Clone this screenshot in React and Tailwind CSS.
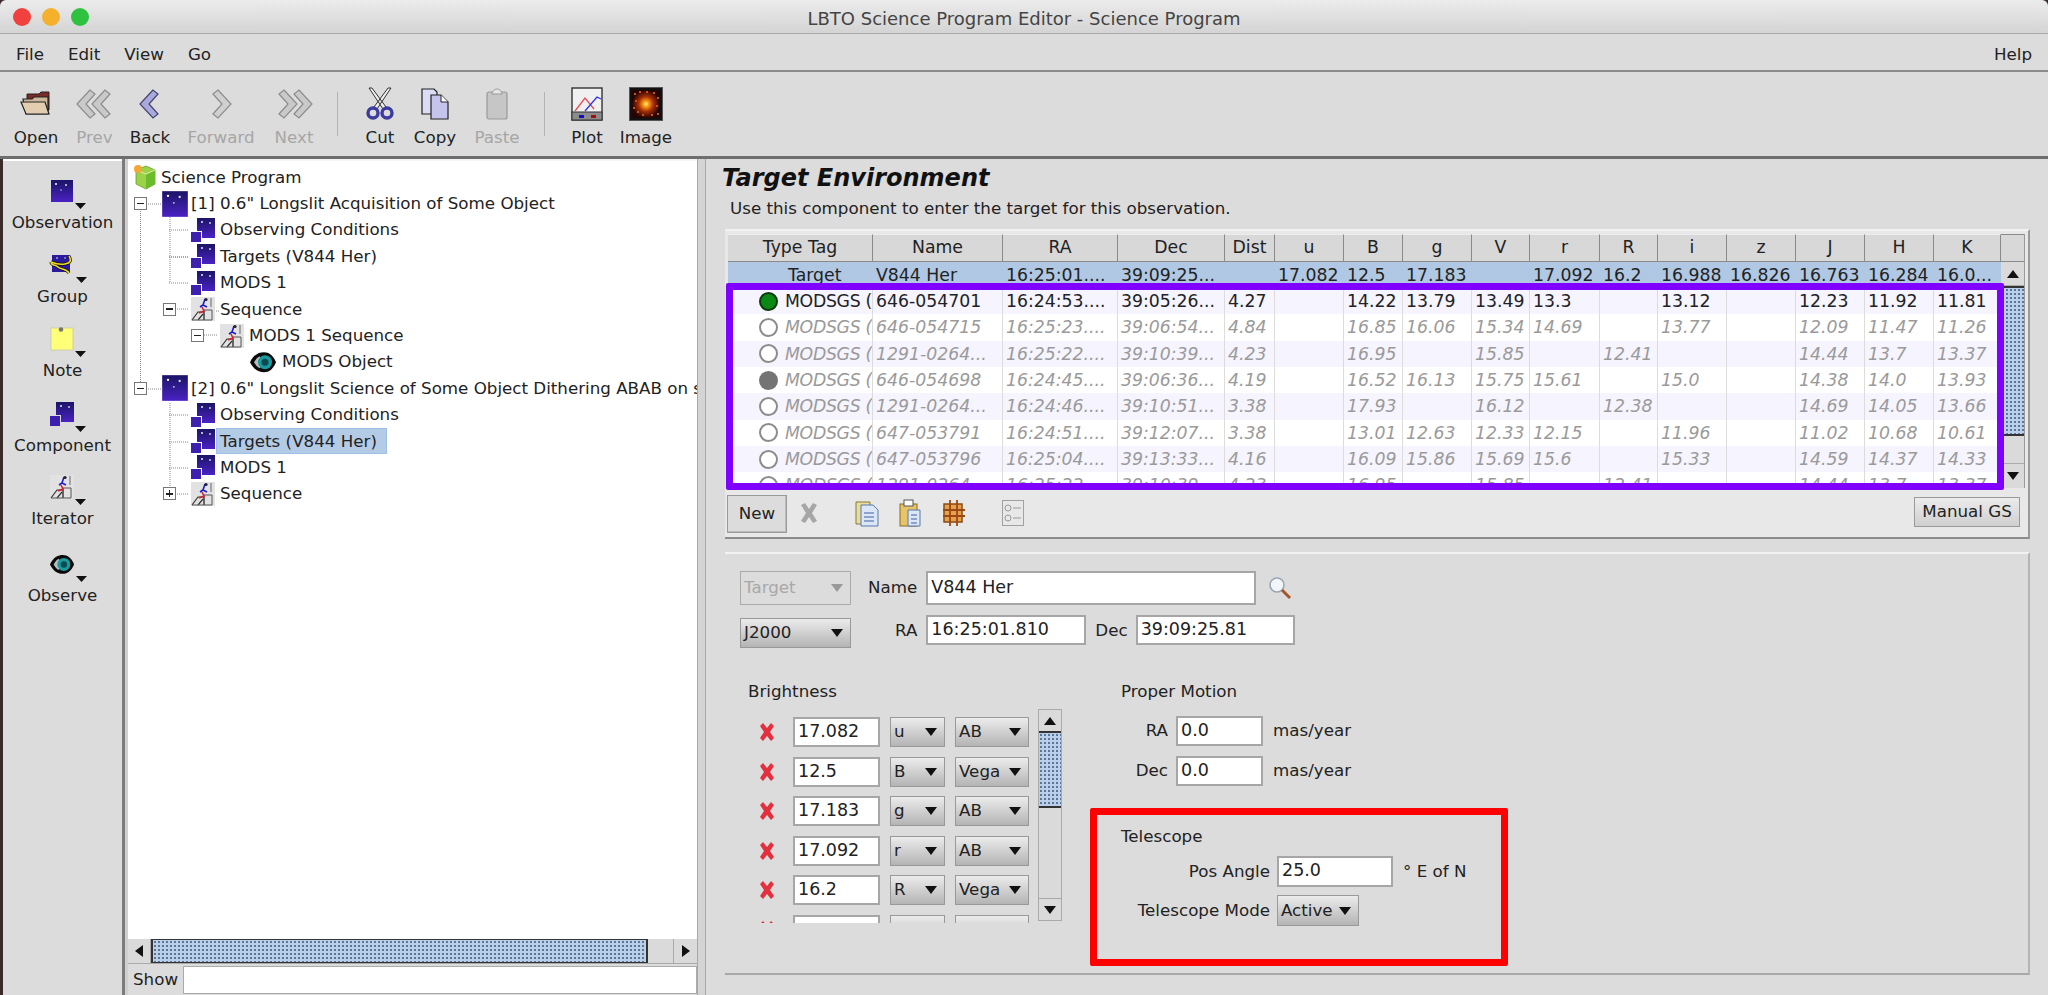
import React from "react";

const tableCols = ["Type Tag", "Name", "RA", "Dec", "Dist", "u", "B", "g", "V", "r", "R", "i", "z", "J", "H", "K"];
const gridCols = "grid grid-cols-[145px_130px_115px_107px_50px_69px_59px_69px_58px_70px_58px_69px_69px_69px_69px_67px]";

const targetRow = ["Target", "V844 Her", "16:25:01....", "39:09:25...", "", "17.082", "12.5", "17.183", "", "17.092", "16.2", "16.988", "16.826", "16.763", "16.284", "16.0..."];

const guideStars = [
  { radio: "green", cells: ["MODSGS (", "646-054701", "16:24:53....", "39:05:26...", "4.27", "", "14.22", "13.79", "13.49", "13.3", "", "13.12", "", "12.23", "11.92", "11.81"] },
  { radio: "empty", cells: ["MODSGS (", "646-054715", "16:25:23....", "39:06:54...", "4.84", "", "16.85", "16.06", "15.34", "14.69", "", "13.77", "", "12.09", "11.47", "11.26"] },
  { radio: "empty", cells: ["MODSGS (", "1291-0264...", "16:25:22....", "39:10:39...", "4.23", "", "16.95", "", "15.85", "", "12.41", "", "", "14.44", "13.7", "13.37"] },
  { radio: "gray", cells: ["MODSGS (", "646-054698", "16:24:45....", "39:06:36...", "4.19", "", "16.52", "16.13", "15.75", "15.61", "", "15.0", "", "14.38", "14.0", "13.93"] },
  { radio: "empty", cells: ["MODSGS (", "1291-0264...", "16:24:46....", "39:10:51...", "3.38", "", "17.93", "", "16.12", "", "12.38", "", "", "14.69", "14.05", "13.66"] },
  { radio: "empty", cells: ["MODSGS (", "647-053791", "16:24:51....", "39:12:07...", "3.38", "", "13.01", "12.63", "12.33", "12.15", "", "11.96", "", "11.02", "10.68", "10.61"] },
  { radio: "empty", cells: ["MODSGS (", "647-053796", "16:25:04....", "39:13:33...", "4.16", "", "16.09", "15.86", "15.69", "15.6", "", "15.33", "", "14.59", "14.37", "14.33"] },
  { radio: "empty", cells: ["MODSGS (", "1291-0264...", "16:25:22....", "39:10:39...", "4.23", "", "16.95", "", "15.85", "", "12.41", "", "", "14.44", "13.7", "13.37"] },
];

const brightness = [
  ["17.082", "u", "AB"],
  ["12.5", "B", "Vega"],
  ["17.183", "g", "AB"],
  ["17.092", "r", "AB"],
  ["16.2", "R", "Vega"],
  ["", "", ""],
];

// speckles for the little image thumbnail in the toolbar
const flareDots = [
  [5, 6], [10, 4], [24, 5], [28, 10], [6, 13], [27, 18], [8, 24], [13, 27], [22, 27], [28, 26], [4, 20], [17, 4],
];

function Stars({ size = 24 }) {
  return (
    <svg width={size} height={size} viewBox="0 0 24 24">
      <defs>
        <linearGradient id="night" x1="0" y1="0" x2="0" y2="1">
          <stop offset="0" stopColor="#1b1466" />
          <stop offset="1" stopColor="#4a22c4" />
        </linearGradient>
      </defs>
      <rect x="1" y="1" width="22" height="22" fill="url(#night)" />
      <circle cx="6" cy="5" r="1" fill="#fff" />
      <circle cx="16" cy="6" r="1" fill="#ddd" />
      <circle cx="11" cy="11" r="0.8" fill="#ccc" />
    </svg>
  );
}

function ComponentIcon({ size = 24 }) {
  return (
    <svg width={size} height={size} viewBox="0 0 24 24">
      <defs>
        <linearGradient id="night2" x1="0" y1="0" x2="0" y2="1">
          <stop offset="0" stopColor="#1b1466" />
          <stop offset="1" stopColor="#4a22c4" />
        </linearGradient>
      </defs>
      <path d="M6 0h18v20H11v-7H6z" fill="url(#night2)" />
      <rect x="0" y="14" width="10" height="10" fill="#3d20b0" />
      <circle cx="11" cy="4" r="0.9" fill="#fff" />
      <circle cx="19" cy="5" r="0.9" fill="#ddd" />
    </svg>
  );
}

function SeqIcon({ size = 24 }) {
  return (
    <svg width={size} height={size} viewBox="0 0 24 24">
      <rect x="0" y="0" width="24" height="24" fill="#e2e2e2" />
      <path d="M1 23l6-8h6v8M7 23l5-6" fill="none" stroke="#333" strokeWidth="1.2" />
      <path d="M13 23V13h8v10H1" fill="none" stroke="#555" strokeWidth="1" />
      <path d="M20 1v9" stroke="#666" strokeWidth="1" />
      <path d="M14 2l-2 6-3 2M12 8l4 2" fill="none" stroke="#1c1ccc" strokeWidth="1.6" />
      <path d="M11 10l2 4-5 2" fill="none" stroke="#d32030" strokeWidth="1.6" />
      <circle cx="15" cy="2.5" r="1.6" fill="#222" />
    </svg>
  );
}

function EyeIcon({ width = 28 }) {
  return (
    <svg width={width} height={width * 0.8} viewBox="0 0 28 22">
      <path d="M1 11C5 3 10 1 15 1s9 3 12 10c-3 7-7 10-12 10S5 19 1 11z" fill="#0a0a0a" />
      <path d="M5 11c2-3 3-5 6-6v12c-3-1-4-3-6-6z" fill="#bbb" />
      <circle cx="16" cy="11" r="7" fill="#1a9aa0" />
      <circle cx="16" cy="11" r="3.5" fill="#0c4a50" />
    </svg>
  );
}

function CubeIcon() {
  return (
    <svg width="24" height="26" viewBox="0 0 24 26">
      <path d="M3 6l10-4 9 4v14l-9 5-10-5z" fill="#9bd24a" stroke="#6a9a30" strokeWidth="0.8" />
      <path d="M13 10v15l9-5V6z" fill="#6cbb2a" />
      <path d="M3 6l10 4 9-4" fill="none" stroke="#dff0a0" strokeWidth="1" />
      <circle cx="5" cy="5" r="4" fill="#f2a634" />
    </svg>
  );
}

function GroupIcon() {
  return (
    <svg width="26" height="24" viewBox="0 0 26 24">
      <rect x="3" y="2" width="18" height="17" fill="#2c1a9c" />
      <circle cx="8" cy="5" r="0.8" fill="#fff" />
      <circle cx="16" cy="5" r="0.8" fill="#ddd" />
      <path d="M2 9c0 4 4 2 7 5s8 1 11 6M20 3c3 5 1 7-4 8s-9 0-14-2" fill="none" stroke="#111" strokeWidth="3" />
      <path d="M2 9c0 4 4 2 7 5s8 1 11 6M20 3c3 5 1 7-4 8s-9 0-14-2" fill="none" stroke="#f0dc20" strokeWidth="1.5" />
    </svg>
  );
}

function NoteIcon() {
  return (
    <svg width="24" height="24" viewBox="0 0 24 24">
      <rect x="1" y="1" width="22" height="22" fill="#ffff78" stroke="#c8c8a0" strokeWidth="0.8" />
      <circle cx="11" cy="2.5" r="2.3" fill="#777" />
    </svg>
  );
}

function DropMark() {
  return (
    <svg width="11" height="6" viewBox="0 0 11 6" className="ml-[1px] self-end mb-[-4px]">
      <path d="M0 0h11L5.5 6z" fill="#111" />
    </svg>
  );
}

function Chevrons({ dir, count, fill, line }) {
  const flip = dir === "left" ? "" : "scale(-1 1) translate(-38 0)";
  return (
    <svg width="38" height="30" viewBox="0 0 38 30">
      <g transform={flip}>
        {count === 2 && <path d="M14 1L1 15l13 14 5-4-9-10 9-10z" fill={fill} stroke={line} strokeWidth="1.2" />}
        <path d={count === 2 ? "M29 1L16 15l13 14 5-4-9-10 9-10z" : "M22 1L9 15l13 14 5-4-9-10 9-10z"} fill={fill} stroke={line} strokeWidth="1.2" />
      </g>
    </svg>
  );
}

function ToolIcon({ name }) {
  if (name === "Open") {
    return (
      <svg width="32" height="26" viewBox="0 0 32 26">
        <path d="M7 6V3h12l2-2h8v18H7z" fill="#7a2a2a" stroke="#222" strokeWidth="1" />
        <path d="M3 8h9l2-2h14v17H6z" fill="#cdb79a" stroke="#222" strokeWidth="1.2" />
        <path d="M1 11h24l4 12H6z" fill="#e3cdb0" stroke="#222" strokeWidth="1.2" />
      </svg>
    );
  }
  if (name === "Prev") return <Chevrons dir="left" count={2} fill="#c9c9c9" line="#8c8c8c" />;
  if (name === "Back") return <Chevrons dir="left" count={1} fill="#a9a9dc" line="#44446e" />;
  if (name === "Forward") return <Chevrons dir="right" count={1} fill="#d0d0d0" line="#8c8c8c" />;
  if (name === "Next") return <Chevrons dir="right" count={2} fill="#c9c9c9" line="#8c8c8c" />;
  if (name === "Cut") {
    return (
      <svg width="28" height="34" viewBox="0 0 28 34">
        <path d="M3 1l14 21 3-2L6 1zM25 1L11 22l-3-2L22 1z" fill="#eee" stroke="#333" strokeWidth="1" />
        <circle cx="7" cy="26" r="5" fill="none" stroke="#3c3ca0" strokeWidth="3.4" />
        <circle cx="21" cy="26" r="5" fill="none" stroke="#3c3ca0" strokeWidth="3.4" />
      </svg>
    );
  }
  if (name === "Copy") {
    return (
      <svg width="28" height="32" viewBox="0 0 28 32">
        <path d="M1 1h12l3 3v22H1z" fill="#dcdcf4" stroke="#222" strokeWidth="1.2" />
        <path d="M10 7h10l7 7v17H10z" fill="#c4c4ec" stroke="#222" strokeWidth="1.2" />
        <path d="M20 7v7h7" fill="#fff" stroke="#222" strokeWidth="1" />
      </svg>
    );
  }
  if (name === "Paste") {
    return (
      <svg width="22" height="32" viewBox="0 0 22 32">
        <rect x="1" y="4" width="20" height="27" rx="2" fill="#c6c6c6" stroke="#999" strokeWidth="1.2" />
        <path d="M6 6c0-3 3-5 5-5s5 2 5 5z" fill="#e6e6e6" stroke="#999" strokeWidth="1" />
      </svg>
    );
  }
  if (name === "Plot") {
    return (
      <svg width="32" height="34" viewBox="0 0 32 34">
        <rect x="1" y="1" width="30" height="32" fill="#f0f0f0" stroke="#333" strokeWidth="1.4" />
        <rect x="1" y="25" width="30" height="8" fill="#8c8c8c" stroke="#333" strokeWidth="1" />
        <path d="M4 24l10-13 9 11" fill="none" stroke="#ee4a50" strokeWidth="1.3" />
        <path d="M14 24L26 10l4 2" fill="none" stroke="#3030e0" strokeWidth="1.3" />
        <rect x="8" y="28" width="5" height="3" fill="#1010c0" />
        <rect x="20" y="28" width="5" height="3" fill="#a01010" />
      </svg>
    );
  }
  return (
    <svg width="34" height="34" viewBox="0 0 34 34">
      <defs>
        <radialGradient id="flare">
          <stop offset="0" stopColor="#fff6a0" />
          <stop offset="0.2" stopColor="#ff9a10" />
          <stop offset="0.55" stopColor="#a32c06" />
          <stop offset="1" stopColor="#240503" />
        </radialGradient>
      </defs>
      <rect x="0.5" y="0.5" width="33" height="33" fill="#111" stroke="#555" />
      <rect x="3" y="3" width="28" height="28" fill="url(#flare)" />
      {flareDots.map(([x, y]) => (
        <rect key={`${x}-${y}`} x={x} y={y} width="2" height="2" fill="#c8501a" />
      ))}
    </svg>
  );
}

function TreeExpander({ open = true }) {
  return (
    <span className="flex h-[13px] w-[13px] items-center justify-center border border-[#777] bg-white">
      <span className="relative h-[1.5px] w-[7px] bg-[#222]">
        {!open && <span className="absolute left-[2.75px] top-[-2.75px] h-[7px] w-[1.5px] bg-[#222]" />}
      </span>
    </span>
  );
}

function TreeRow({ indent, expander, open, icon, iconBox, selected, children }) {
  return (
    <div className="flex h-[26.4px] items-center whitespace-nowrap" style={{ paddingLeft: indent }}>
      {expander !== undefined && (
        <span className="flex shrink-0" style={{ width: expander }}>
          <TreeExpander open={open} />
        </span>
      )}
      <span className="flex shrink-0 items-center" style={{ width: iconBox }}>
        {icon}
      </span>
      <span className={selected ? "-ml-[4px] border border-[#9cc0ea] bg-[#b4cbe6] pl-[3px] pr-[9px] leading-[24px]" : ""}>{children}</span>
    </div>
  );
}

function Arrow({ dir, color = "#111" }) {
  const d = { up: "M0 8h12L6 0z", down: "M0 0h12L6 8z", left: "M8 0v12L0 6z", right: "M0 0v12l8-6z" }[dir];
  const vertical = dir === "up" || dir === "down";
  return (
    <svg width={vertical ? 12 : 8} height={vertical ? 8 : 12} viewBox={vertical ? "0 0 12 8" : "0 0 8 12"}>
      <path d={d} fill={color} />
    </svg>
  );
}

const thumbV = "border-y-2 border-[#333] bg-[#b9cfea] bg-[radial-gradient(#5d7596_1px,transparent_1.3px)] bg-size-[4px_4px]";

function Select({ value, className = "", disabled }) {
  return (
    <div
      className={`flex items-center justify-between pl-[3px] pr-[7px] border ${
        disabled
          ? "border-[#aaa] bg-[#dcdcdc] text-[#a8a8a8]"
          : "border-[#999] bg-linear-to-b from-[#ececec] to-[#b4b4b4] text-[#222]"
      } ${className}`}
    >
      <span>{value}</span>
      <Arrow dir="down" color={disabled ? "#999" : "#111"} />
    </div>
  );
}

function Field({ value, className = "" }) {
  return <div className={`border-2 border-[#a6a6a6] bg-white pl-[3px] text-[17.5px] text-[#222] ${className}`}>{value}</div>;
}

function RemoveMark() {
  return (
    <svg width="16" height="20" viewBox="0 0 16 20">
      <path d="M1 4l3-3 4 5 4-5 3 3-4 6 4 6-3 3-4-5-4 5-3-3 4-6z" fill="#e4303e" />
    </svg>
  );
}

function Radio({ kind }) {
  if (kind === "green") return <span className="h-[19px] w-[19px] shrink-0 rounded-full border-2 border-[#0f3a0f] bg-[#0a8a14]" />;
  if (kind === "gray") return <span className="h-[19px] w-[19px] shrink-0 rounded-full bg-[#747474]" />;
  return <span className="h-[19px] w-[19px] shrink-0 rounded-full border-2 border-[#8c8c8c] bg-white" />;
}

function SideButton({ icon, label, mt }) {
  return (
    <div className={`flex flex-col items-center ${mt}`}>
      <div className="flex h-[28px] items-center pl-[10px]">
        {icon}
        <DropMark />
      </div>
      <span className="mt-[6px] leading-[22px]">{label}</span>
    </div>
  );
}

function ToolButton({ name, width, disabled }) {
  return (
    <div className="flex flex-col items-center" style={{ width }}>
      <div className="flex h-[36px] items-center">
        <ToolIcon name={name} />
      </div>
      <span className={`mt-[4px] leading-[22px] ${disabled ? "text-[#a6a6a6]" : "text-[#222]"}`}>{name}</span>
    </div>
  );
}

export default function App() {
  return (
    <div className="flex h-[995px] w-[2048px] flex-col overflow-hidden bg-[#3a2a2a] font-['DejaVu_Sans',sans-serif] text-[16.7px] text-[#222]">
      {/* title bar */}
      <div className="relative flex h-[34px] shrink-0 items-center justify-center rounded-t-[6px] border-b border-[#a8a8a8] bg-linear-to-b from-[#ececec] to-[#d4d4d4] pt-[3px] text-[18px] text-[#444]">
        <div className="absolute left-[13px] top-[8px] flex gap-[11px]">
          <span className="h-[18px] w-[18px] rounded-full bg-[#f0413e]" />
          <span className="h-[18px] w-[18px] rounded-full bg-[#f5b02e]" />
          <span className="h-[18px] w-[18px] rounded-full bg-[#2fc23f]" />
        </div>
        LBTO Science Program Editor - Science Program
      </div>

      {/* menu bar */}
      <div className="flex h-[38px] shrink-0 items-center gap-[24px] border-b-2 border-[#8a8a8a] bg-[#dcdcdc] pl-[16px] pr-[16px] pt-[6px]">
        <span>File</span>
        <span>Edit</span>
        <span>View</span>
        <span>Go</span>
        <span className="ml-auto">Help</span>
      </div>

      {/* toolbar */}
      <div className="flex h-[87px] shrink-0 items-start border-b-[3px] border-[#6e6e6e] bg-[#dcdcdc] pl-[7px] pt-[14px]">
        <ToolButton name="Open" width={58} />
        <ToolButton name="Prev" width={59} disabled />
        <ToolButton name="Back" width={52} />
        <ToolButton name="Forward" width={90} disabled />
        <ToolButton name="Next" width={56} disabled />
        <span className="mx-[15px] mt-[6px] h-[44px] w-[1px] bg-[#b4b4b4]" />
        <ToolButton name="Cut" width={54} />
        <ToolButton name="Copy" width={56} />
        <ToolButton name="Paste" width={68} disabled />
        <span className="mx-[13px] mt-[6px] h-[44px] w-[1px] bg-[#b4b4b4]" />
        <ToolButton name="Plot" width={58} />
        <ToolButton name="Image" width={60} />
      </div>

      <div className="flex min-h-0 flex-1">
        {/* palette */}
        <div className="ml-[3px] flex w-[119px] shrink-0 flex-col border-t-2 border-white bg-[#dcdcdc] pt-[16px]">
          <SideButton icon={<Stars />} label="Observation" mt="" />
          <SideButton icon={<GroupIcon />} label="Group" mt="mt-[18px]" />
          <SideButton icon={<NoteIcon />} label="Note" mt="mt-[18px]" />
          <SideButton icon={<ComponentIcon />} label="Component" mt="mt-[19px]" />
          <SideButton icon={<SeqIcon />} label="Iterator" mt="mt-[17px]" />
          <SideButton icon={<EyeIcon width={26} />} label="Observe" mt="mt-[21px]" />
        </div>
        <div className="w-[6px] shrink-0 border-l-[3px] border-[#7c7c7c] bg-[#d0d0d0]" />

        {/* tree */}
        <div className="flex w-[569px] shrink-0 flex-col">
          <div className="relative min-h-0 flex-1 overflow-hidden border-t-2 border-[#f4f4f4] bg-white pt-[3px]">
            <svg className="absolute left-0 top-[2px]" width="569" height="340">
              <g stroke="#888" strokeWidth="1" strokeDasharray="1 1" fill="none">
                <path d="M12.5 34V226M42 54V120M70 108V120M70 134v14h22" />
                <path d="M20 41h13M41 94h19M41 67h19M41 94h19M41 120h19" />
                <path d="M41 146h19M70 172h20M20 226h13M41 252h19M41 279h19M41 305h19M41 331h19" />
                <path d="M42 240V331" />
              </g>
            </svg>
            <div className="relative">
              <TreeRow indent={5} iconBox={28} icon={<CubeIcon />}>Science Program</TreeRow>
              <TreeRow indent={6} expander={27} icon={<Stars size={28} />} iconBox={30}>[1] 0.6" Longslit Acquisition of Some Object</TreeRow>
              <TreeRow indent={63} icon={<ComponentIcon />} iconBox={29}>Observing Conditions</TreeRow>
              <TreeRow indent={63} icon={<ComponentIcon />} iconBox={29}>Targets (V844 Her)</TreeRow>
              <TreeRow indent={63} icon={<ComponentIcon />} iconBox={29}>MODS 1</TreeRow>
              <TreeRow indent={35} expander={28} icon={<SeqIcon />} iconBox={29}>Sequence</TreeRow>
              <TreeRow indent={63} expander={29} icon={<SeqIcon />} iconBox={29}>MODS 1 Sequence</TreeRow>
              <TreeRow indent={121} icon={<EyeIcon />} iconBox={33}>MODS Object</TreeRow>
              <TreeRow indent={6} expander={27} icon={<Stars size={28} />} iconBox={30}>[2] 0.6" Longslit Science of Some Object Dithering ABAB on sky</TreeRow>
              <TreeRow indent={63} icon={<ComponentIcon />} iconBox={29}>Observing Conditions</TreeRow>
              <TreeRow indent={63} icon={<ComponentIcon />} iconBox={29} selected>Targets (V844 Her)</TreeRow>
              <TreeRow indent={63} icon={<ComponentIcon />} iconBox={29}>MODS 1</TreeRow>
              <TreeRow indent={35} expander={28} open={false} icon={<SeqIcon />} iconBox={29}>Sequence</TreeRow>
            </div>
          </div>
          <div className="flex h-[24px] shrink-0 bg-[#dadada]">
            <span className="flex w-[23px] items-center justify-center border-r border-[#aaa]"><Arrow dir="left" /></span>
            <span className="w-[497px] border-y border-x-2 border-[#333] bg-[#b9cfea] bg-[radial-gradient(#5d7596_1px,transparent_1.3px)] bg-size-[4px_4px]" />
            <span className="flex-1" />
            <span className="flex w-[24px] items-center justify-center border-l border-[#aaa]"><Arrow dir="right" /></span>
          </div>
          <div className="flex h-[32px] shrink-0 items-center border-t border-[#aaa] bg-[#dcdcdc] pl-[5px]">
            <span className="w-[50px]">Show</span>
            <span className="h-[28px] flex-1 border border-[#aaa] bg-white" />
          </div>
        </div>

        {/* divider */}
        <div className="w-[9px] shrink-0 border-x border-[#a8a8a8] bg-[#d4d4d4]" />

        {/* editor */}
        <div className="flex min-w-0 flex-1 flex-col bg-[#dcdcdc]">
          <div className="pl-[16px] pt-[4px] text-[24px] font-bold italic leading-[30px] text-[#111]">Target Environment</div>
          <div className="mt-[3px] pl-[24px] leading-[24px] text-[#222]">Use this component to enter the target for this observation.</div>

          {/* table panel */}
          <div className="ml-[19px] mt-[9px] flex h-[310px] w-[1305px] flex-col border-y-2 border-r-2 border-t-[#f2f2f2] border-r-[#9a9a9a] border-b-[#8c8c8c] bg-[#e8e8e8]">
            <div className="relative ml-[3px] mt-[3px] w-[1297px] border-r border-[#999] text-[17.3px]">
              <div className="flex h-[28px]">
                <div className={gridCols}>
                  {tableCols.map((col) => (
                    <div key={col} className="flex h-[28px] items-center justify-center border-y border-r border-[#8a8a8a] border-t-[#eee] bg-[#d8d8d8] text-[#222]">
                      {col}
                    </div>
                  ))}
                </div>
                <div className="w-[23px] border-y border-[#8a8a8a] bg-[#d8d8d8]" />
              </div>
              <div className="flex h-[226px]">
                <div className="h-[226px] overflow-hidden bg-white">
                  <div className={`${gridCols} h-[26px] bg-[#b0c8e3] text-[#222]`}>
                    {targetRow.map((cell, i) => (
                      <div key={i} className={`overflow-hidden whitespace-nowrap leading-[26px] ${i === 0 ? "pl-[60px]" : "pl-[3px]"}`}>{cell}</div>
                    ))}
                  </div>
                  {guideStars.map((row, r) => (
                    <div key={r} className={`${gridCols} h-[26.33px] ${r % 2 === 0 ? "bg-[#f5f4ff]" : "bg-white"} ${r === 0 ? "text-[#222]" : "italic text-[#9a9a9a]"}`}>
                      {row.cells.map((cell, i) => (
                        <div key={i} className={`overflow-hidden whitespace-nowrap border-r border-[#dcdcdc] leading-[26px] ${i === 0 ? "flex items-center pl-[31px]" : "pl-[3px]"}`}>
                          {i === 0 && <Radio kind={row.radio} />}
                          {i === 0 ? <span className="ml-[7px] tracking-[-0.3px]">{cell}</span> : cell}
                        </div>
                      ))}
                    </div>
                  ))}
                </div>
                <div className="flex w-[23px] flex-col bg-[#dadada]">
                  <span className="flex h-[24px] items-center justify-center border-b border-[#aaa]"><Arrow dir="up" /></span>
                  <span className={`h-[150px] ${thumbV}`} />
                  <span className="flex-1" />
                  <span className="flex h-[25px] items-center justify-center border-t border-[#aaa]"><Arrow dir="down" /></span>
                </div>
              </div>
              {/* highlight frame drawn on top of the guide star rows */}
              <div className="pointer-events-none absolute left-[-2px] top-[49px] h-[207px] w-[1278px] rounded-[2px] border-[7px] border-[#7f00ff]" />
            </div>
            <div className="flex flex-1 items-center pl-[2px]">
              <button className="mt-[2px] h-[38px] w-[60px] border border-[#9a9a9a] bg-[#dcdcdc] shadow-[inset_-1px_-1px_0_#bbb]">New</button>
              <svg className="ml-[12px]" width="20" height="24" viewBox="0 0 20 24">
                <path d="M2 4l4-2 4 6 4-6 4 2-5 8 5 8-4 2-4-6-4 6-4-2 5-8z" fill="#a6a6a6" />
              </svg>
              <svg className="ml-[36px]" width="24" height="28" viewBox="0 0 24 28">
                <path d="M1 3h14v22H1z" fill="#e8dca0" stroke="#8a7a30" />
                <path d="M6 6h12l5 5v16H6z" fill="#dbe6f6" stroke="#5878a8" />
                <path d="M9 14h10M9 18h10M9 22h10" stroke="#4060a0" />
              </svg>
              <svg className="ml-[20px]" width="24" height="28" viewBox="0 0 24 28">
                <rect x="1" y="5" width="17" height="22" fill="#e8c468" stroke="#8a6a20" />
                <rect x="5" y="1" width="9" height="6" fill="#fff" stroke="#555" />
                <path d="M9 11h12v16H9z" fill="#dbe6f6" stroke="#5878a8" />
                <path d="M12 16h6M12 20h6M12 24h6" stroke="#4060a0" />
              </svg>
              <svg className="ml-[19px]" width="24" height="28" viewBox="0 0 24 28">
                <rect x="2" y="5" width="18" height="18" fill="#e6a050" stroke="#8a4a10" strokeWidth="1.5" />
                <path d="M8 1v26M15 1v26M1 11h22M1 17h22" stroke="#9a4a10" strokeWidth="1.8" />
              </svg>
              <svg className="ml-[36px]" width="22" height="26" viewBox="0 0 22 26">
                <rect x="0.5" y="0.5" width="21" height="25" fill="#e8e8e8" stroke="#a0a0a0" />
                <circle cx="6" cy="8" r="3" fill="none" stroke="#999" />
                <circle cx="6" cy="18" r="3" fill="none" stroke="#999" />
                <path d="M11 8h8M11 18h8" stroke="#999" />
              </svg>
              <button className="ml-auto mr-[8px] mb-[1px] h-[30px] w-[106px] border border-[#9a9a9a] bg-linear-to-b from-[#ececec] to-[#cfcfcf]">Manual GS</button>
            </div>
          </div>

          {/* form panel */}
          <div className="ml-[19px] mt-[13px] h-[423px] w-[1305px] border-y-2 border-r-2 border-t-[#f2f2f2] border-r-[#b4b4b4] border-b-[#a8a8a8] pl-[15px] pt-[17px]">
            <div className="flex items-center">
              <Select value="Target" disabled className="h-[34px] w-[111px]" />
              <span className="ml-[17px]">Name</span>
              <Field value="V844 Her" className="ml-[9px] h-[34px] w-[330px] leading-[28px]" />
              <svg className="ml-[12px]" width="24" height="24" viewBox="0 0 24 24">
                <circle cx="9" cy="9" r="7" fill="#f2f6fa" stroke="#9aa6b2" strokeWidth="1.6" />
                <path d="M14 14l8 8" stroke="#a5552a" strokeWidth="3" />
              </svg>
            </div>
            <div className="mt-[10px] flex items-start">
              <Select value="J2000" className="mt-[3px] h-[30px] w-[111px]" />
              <span className="ml-[44px] mt-[3px] leading-[24px]">RA</span>
              <Field value="16:25:01.810" className="ml-[9px] h-[30px] w-[160px] leading-[24px]" />
              <span className="ml-[9px] mt-[3px] leading-[24px]">Dec</span>
              <Field value="39:09:25.81" className="ml-[8px] h-[30px] w-[159px] leading-[24px]" />
            </div>

            <div className="mt-[31px] flex items-start">
              <div className="flex w-[350px] shrink-0 flex-col">
                <div className="ml-[8px] leading-[24px]">Brightness</div>
                <div className="mt-[6px] flex">
                  <div className="mt-[8px] flex h-[206px] w-[289px] shrink-0 flex-col gap-[9.5px] overflow-hidden">
                    {brightness.map((row, i) => (
                      <div key={i} className="flex h-[30px] shrink-0 items-center">
                        <span className="ml-[19px] flex w-[34px] shrink-0"><RemoveMark /></span>
                        <Field value={row[0]} className="h-[30px] w-[87px] shrink-0 leading-[24px]" />
                        <Select value={row[1]} className="ml-[10px] h-[30px] w-[55px] shrink-0" />
                        <Select value={row[2]} className="ml-[10px] h-[30px] w-[74px] shrink-0" />
                      </div>
                    ))}
                  </div>
                  <div className="ml-[9px] flex h-[212px] w-[24px] shrink-0 flex-col border border-[#aaa] bg-[#dadada]">
                    <span className="flex h-[21px] items-center justify-center"><Arrow dir="up" /></span>
                    <span className={`h-[77px] ${thumbV}`} />
                    <span className="flex-1" />
                    <span className="flex h-[22px] items-center justify-center border-t border-[#aaa]"><Arrow dir="down" /></span>
                  </div>
                </div>
              </div>

              <div className="flex flex-col">
                <div className="ml-[31px] leading-[24px]">Proper Motion</div>
                <div className="mt-[13px] flex flex-col gap-[10px]">
                  {["RA", "Dec"].map((label) => (
                    <div key={label} className="flex h-[30px] items-center">
                      <span className="w-[78px] text-right">{label}</span>
                      <Field value="0.0" className="ml-[8px] h-[30px] w-[87px] leading-[24px]" />
                      <span className="ml-[10px]">mas/year</span>
                    </div>
                  ))}
                </div>
                <div className="mt-[22px] flex h-[158px] w-[418px] flex-col rounded-[2px] border-[7px] border-[#ff0000] pl-[24px]">
                  <div className="mt-[9px] leading-[24px]">Telescope</div>
                  <div className="mt-[8px] flex h-[31px] items-center">
                    <span className="w-[149px] text-right">Pos Angle</span>
                    <Field value="25.0" className="ml-[7px] h-[31px] w-[116px] leading-[25px]" />
                    <span className="ml-[10px]">° E of N</span>
                  </div>
                  <div className="mt-[8px] flex h-[31px] items-center">
                    <span className="w-[149px] whitespace-nowrap text-right">Telescope Mode</span>
                    <Select value="Active" className="ml-[7px] h-[31px] w-[82px]" />
                  </div>
                </div>
              </div>
            </div>
          </div>
        </div>
      </div>
    </div>
  );
}
